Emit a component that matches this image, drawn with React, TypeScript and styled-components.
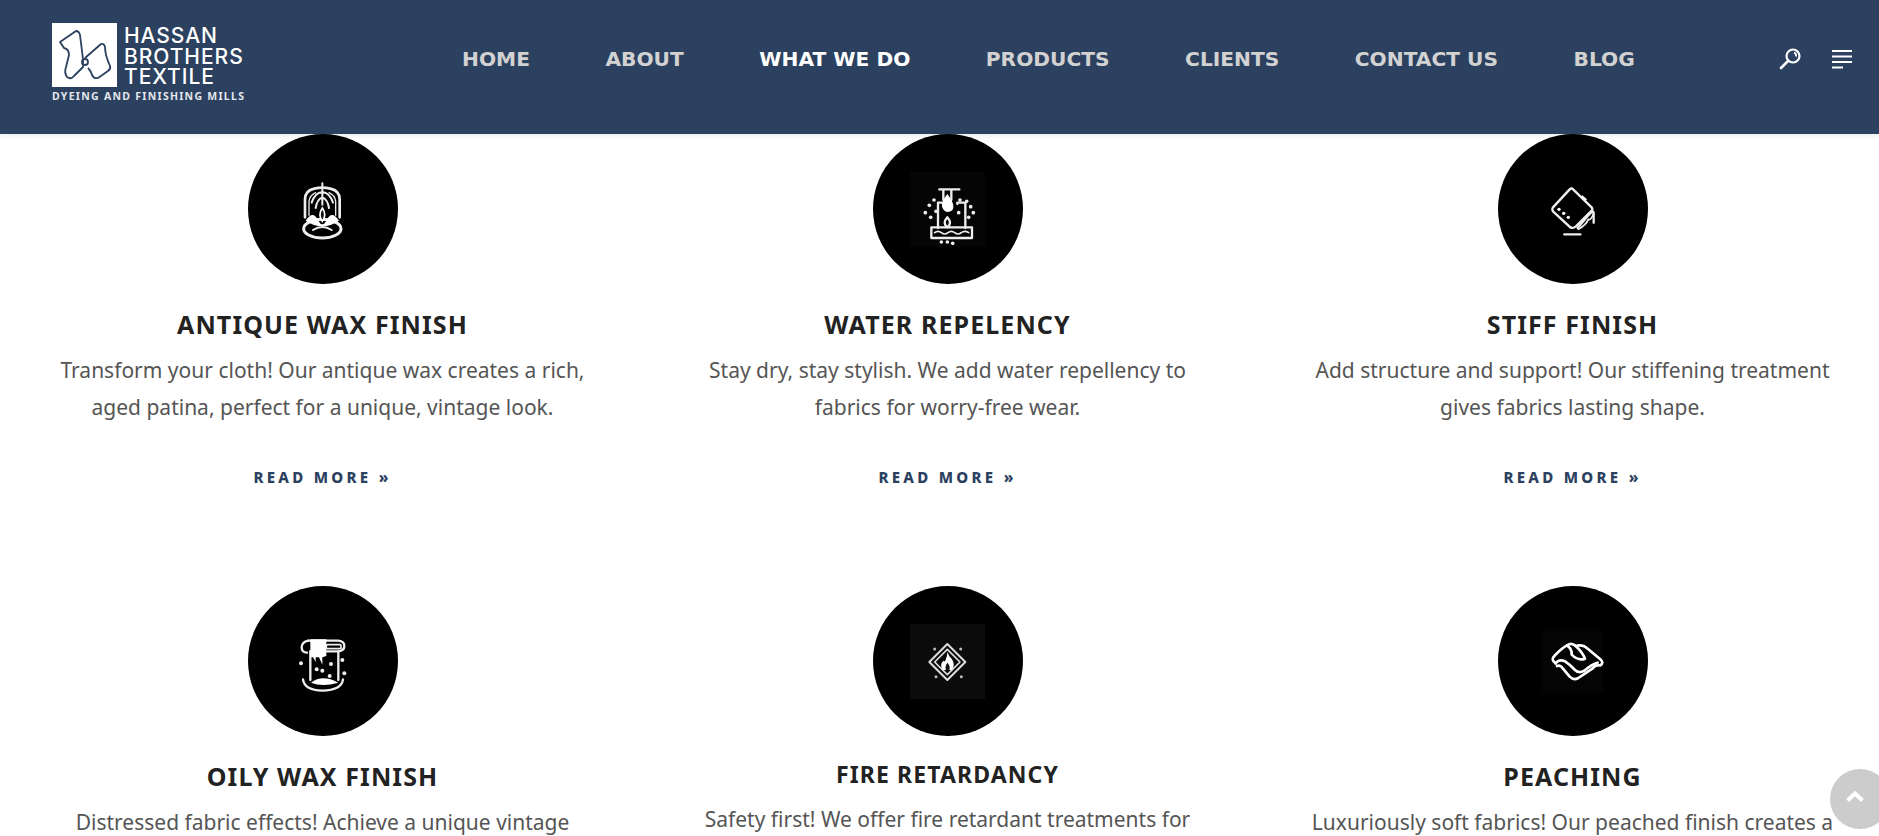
import React from "react";
import styled, { createGlobalStyle } from "styled-components";

const Global = createGlobalStyle`
  html, body { margin: 0; padding: 0; background: #fff; height: 836px; overflow: hidden; }
  * { box-sizing: border-box; }
`;

const Page = styled.div`
  width: 1879px;
  height: 836px;
  overflow: hidden;
  font-family: "Noto Sans", sans-serif;
`;

const Header = styled.header`
  height: 134px;
  background: #2c4160;
  display: flex;
  align-items: flex-start;
  box-shadow: 0 2px 6px rgba(0, 0, 0, 0.08);
  position: relative;
  z-index: 2;
`;

const Logo = styled.a`
  display: flex;
  flex-direction: column;
  width: 196px;
  margin: 23px 0 0 52px;
  color: #fff;
`;

const LogoTop = styled.div`
  display: flex;
  gap: 7px;
`;

const LogoMark = styled.svg`
  width: 65px;
  height: 64px;
  display: block;
  flex: none;
`;

const LogoName = styled.div`
  display: flex;
  flex-direction: column;
  font-family: Inter, "Noto Sans", sans-serif;
  font-size: 21px;
  font-weight: 500;
  letter-spacing: 0.95px;
  padding-top: 3px;
  white-space: nowrap;
`;

const LogoLine = styled.span`
  display: block;
  height: 20.5px;
  line-height: 20.5px;
`;

const LogoSub = styled.div`
  font-size: 10.5px;
  font-weight: 700;
  line-height: 12px;
  letter-spacing: 1.28px;
  margin-top: 2px;
  color: #e3e7ec;
  white-space: nowrap;
`;

const Nav = styled.nav`
  display: flex;
  gap: 75.5px;
  margin: 45px 0 0 214px;
`;

const NavItem = styled.a<{ $active?: boolean }>`
  font-family: "DejaVu Sans", sans-serif;
  font-size: 20.2px;
  font-weight: 700;
  line-height: 28px;
  white-space: nowrap;
  color: ${(p) => (p.$active ? "#ffffff" : "#d2d2d2")};
`;

const HeaderTools = styled.div`
  display: flex;
  gap: 28px;
  margin: 47px 25px 0 auto;
`;

const ToolIcon = styled.svg`
  width: 24px;
  height: 24px;
  display: block;
`;

const Grid = styled.main`
  display: grid;
  grid-template-columns: repeat(3, 625px);
  grid-auto-rows: 452px;
  margin-left: 10px;
`;

const Card = styled.article`
  display: flex;
  flex-direction: column;
  align-items: center;
  text-align: center;
`;

const Disc = styled.div`
  width: 150px;
  height: 150px;
  flex: none;
  border-radius: 50%;
  background: #000;
  display: flex;
  align-items: center;
  justify-content: center;
`;

const IconArt = styled.svg`
  width: 75px;
  height: 75px;
  display: block;
  filter: blur(0.35px);
`;

const Title = styled.h3<{ $compact?: boolean }>`
  margin: ${(p) => (p.$compact ? "21px" : "23px")} 0 0;
  font-size: ${(p) => (p.$compact ? "23px" : "25px")};
  line-height: 34px;
  font-weight: 700;
  letter-spacing: 1.1px;
  color: #222;
  white-space: nowrap;
`;

const Body = styled.p<{ $compact?: boolean }>`
  margin: ${(p) => (p.$compact ? "10px" : "11px")} 0 0;
  font-size: 21px;
  line-height: 37px;
  color: #555;
  white-space: nowrap;
`;

const More = styled.a`
  margin-top: 41px;
  font-size: 15px;
  line-height: 20px;
  font-weight: 800;
  letter-spacing: 3.3px;
  color: #2c4160;
  white-space: nowrap;
`;

const ToTop = styled.a`
  position: fixed;
  left: 1830px;
  top: 769px;
  width: 60px;
  height: 60px;
  border-radius: 50%;
  background: #ccc;
  display: flex;
  align-items: center;
  justify-content: center;
  z-index: 3;
`;

const ChevronArt = styled.svg`
  width: 20px;
  height: 14px;
  margin: 0 10px 6px 0;
  display: block;
`;

const W = { stroke: "#eee", fill: "none", strokeWidth: 7, strokeLinecap: "round" as const, strokeLinejoin: "round" as const };

const Wax = () => (
  <IconArt viewBox="0 0 225 225">
    <g {...W}>
      <path d="M60 136V82Q60 56 88 50Q112 44 136 50Q164 56 164 82V136" strokeWidth="8" />
      <path d="M72 130V88Q74 70 92 62M152 130V88Q150 70 132 62" strokeWidth="4" />
      <path d="M112 34V98M112 60Q90 62 80 92M112 60Q134 62 144 92M112 76Q96 82 92 108M112 76Q128 82 132 108" strokeWidth="6" />
      <ellipse cx="112" cy="170" rx="56" ry="28" strokeWidth="9" />
      <path d="M84 174Q112 156 140 174" strokeWidth="6" />
    </g>
    <path d="M62 146Q84 112 100 146Q112 168 124 146Q140 112 162 146Q112 180 62 146Z" fill="#fff" />
    <path d="M112 108Q98 128 112 148Q126 128 112 108Z" fill="#111" stroke="#fff" strokeWidth="5" />
  </IconArt>
);

const Water = () => (
  <IconArt viewBox="0 0 225 225">
    <rect width="225" height="225" fill="#050505" />
    <g {...W}>
      <path d="M88 52H148M100 52V84M124 52V84" />
      <path d="M84 92V168M142 92V96M142 92H166V168M84 92H96" />
      <path d="M64 166H186V198H64Z" />
      <path d="M74 182Q84 174 94 182T114 182T134 182T154 182T176 182" strokeWidth="5" />
      <path d="M112 136Q96 154 112 166Q128 154 112 136Z" />
    </g>
    <path d="M112 66Q92 92 96 104Q102 120 114 120Q132 118 130 102Q130 90 112 66Z" fill="#fff" />
    {[[46,122],[58,100],[72,84],[62,136],[150,84],[170,88],[182,104],[190,122],[176,136],[78,118],[146,122],[128,214],[112,210],[94,210]].map(([x,y],i)=>(
      <circle key={i} cx={x} cy={y} r="5.5" fill="#eee" />
    ))}
  </IconArt>
);

const Stiff = () => (
  <IconArt viewBox="0 0 225 225">
    <g {...W}>
      <path d="M112 50L170 106Q174 112 170 116L122 164Q114 170 106 166L54 118Q50 112 54 106L104 52Q108 48 112 50Z" />
      <path d="M128 168L160 130L170 120Q176 116 176 124V152" />
      <path d="M176 124Q168 146 160 142Q154 158 130 172" strokeWidth="5" />
      <path d="M88 187H136" />
    </g>
    <path d="M140 72l14 12" stroke="#fff" strokeWidth="6" />
    <circle cx="72" cy="112" r="5" fill="#fff" /><circle cx="86" cy="124" r="5" fill="#fff" /><circle cx="100" cy="136" r="5" fill="#fff" />
  </IconArt>
);

const Oily = () => (
  <IconArt viewBox="0 0 225 225">
    <g {...W}>
      <path d="M70 50H160Q178 52 178 66Q178 80 160 82H76" />
      <path d="M70 50Q50 54 50 70Q50 86 66 86" />
      <path d="M76 82V168M160 82V168" />
      <path d="M54 166Q58 198 112 200Q170 198 174 166" />
      <rect x="124" y="62" width="44" height="12" rx="3" strokeWidth="5" />
    </g>
    <path d="M76 46H124V96L112 100V122L102 100L92 100V114L84 100L76 100Z" fill="#fff" />
    <path d="M78 176Q112 150 160 176Q112 190 78 176Z" fill="#fff" />
    {[[48,118],[172,108],[178,148],[112,140],[95,136],[138,120],[134,156]].map(([x,y],i)=>(
      <circle key={i} cx={x} cy={y} r="6" fill="#eee" />
    ))}
  </IconArt>
);

const Fire = () => (
  <IconArt viewBox="0 0 225 225">
    <rect width="225" height="225" fill="#0b0b0b" />
    <g {...W} stroke="#ddd">
      <path d="M112 60L166 114L112 168L58 114Z" strokeWidth="6" />
      <path d="M112 76L150 114L112 152L74 114Z" strokeWidth="5" />
    </g>
    <path d="M112 84Q118 100 126 106Q136 122 126 138H98Q88 122 100 110Q104 114 106 110Q112 98 112 84Z" fill="#fff" />
    <path d="M112 116Q104 126 108 138H118Q122 126 112 116Z" fill="#111" />
    {[[74,75],[152,75],[78,158],[154,158]].map(([x,y],i)=>(
      <circle key={i} cx={x} cy={y} r="4.5" fill="#bbb" />
    ))}
  </IconArt>
);

const Peach = () => (
  <IconArt viewBox="0 0 225 225">
    <rect x="20" y="20" width="185" height="185" fill="#040404" />
    <g {...W} stroke="#fff" strokeWidth="8">
      <path d="M62 118Q46 106 58 96Q78 74 96 64Q110 54 122 66Q144 60 160 76L196 106Q208 116 196 124Q180 122 172 134L130 162Q116 170 104 158L84 134Q76 122 66 126" />
      <path d="M62 118Q72 104 90 112Q106 122 120 138Q132 150 148 140Q168 122 188 116" />
      <path d="M96 64Q112 76 110 92Q130 112 150 104Q142 84 122 66" />
    </g>
  </IconArt>
);

const items = [
  { art: <Wax />, title: "ANTIQUE WAX FINISH", lines: ["Transform your cloth! Our antique wax creates a rich,", "aged patina, perfect for a unique, vintage look."], more: true },
  { art: <Water />, title: "WATER REPELENCY", lines: ["Stay dry, stay stylish. We add water repellency to", "fabrics for worry-free wear."], more: true },
  { art: <Stiff />, title: "STIFF FINISH", lines: ["Add structure and support! Our stiffening treatment", "gives fabrics lasting shape."], more: true },
  { art: <Oily />, title: "OILY WAX FINISH", lines: ["Distressed fabric effects! Achieve a unique vintage"] },
  { art: <Fire />, title: "FIRE RETARDANCY", lines: ["Safety first! We offer fire retardant treatments for"], compact: true },
  { art: <Peach />, title: "PEACHING", lines: ["Luxuriously soft fabrics! Our peached finish creates a"] },
];

const nav = ["HOME", "ABOUT", "WHAT WE DO", "PRODUCTS", "CLIENTS", "CONTACT US", "BLOG"];

export default function App() {
  return (
    <Page>
      <Global />
      <Header>
        <Logo>
          <LogoTop>
            <LogoMark viewBox="0 0 65 64">
              <rect width="65" height="64" fill="#fff" />
              <g fill="none" stroke="#2c4160" strokeWidth="1.8" strokeLinejoin="round">
                <path d="M8 19L24 8Q27 8 28 12L31 36L31 44L22 53Q19 57 15 54Q12 50 14 44L17 32Q17 26 12 25Z" />
                <path d="M33 35L49 21Q52 20 53 24Q53 32 58 43Q59 46 56 48L46 55Q42 56 40 52Q39 48 36 45" />
                <circle cx="33" cy="39" r="3" />
              </g>
            </LogoMark>
            <LogoName>
              <LogoLine>HASSAN</LogoLine>
              <LogoLine>BROTHERS</LogoLine>
              <LogoLine>TEXTILE</LogoLine>
            </LogoName>
          </LogoTop>
          <LogoSub>DYEING AND FINISHING MILLS</LogoSub>
        </Logo>
        <Nav>
          {nav.map((n) => (
            <NavItem key={n} $active={n === "WHAT WE DO"}>{n}</NavItem>
          ))}
        </Nav>
        <HeaderTools>
          <ToolIcon viewBox="0 0 24 24">
            <circle cx="15" cy="9" r="6.5" fill="none" stroke="#fff" strokeWidth="2.2" />
            <path d="M10 14L3 21" stroke="#fff" strokeWidth="2.6" strokeLinecap="round" />
            <path d="M16 5.5a3.5 3.5 0 0 1 2 4" stroke="#fff" strokeWidth="1.8" fill="none" />
          </ToolIcon>
          <ToolIcon viewBox="0 0 24 24">
            <path d="M2 4H22M2 9.5H22M2 15H22" stroke="#fff" strokeWidth="2" />
            <path d="M2 20.5H13" stroke="#fff" strokeWidth="2" />
          </ToolIcon>
        </HeaderTools>
      </Header>
      <Grid>
        {items.map((it) => (
          <Card key={it.title}>
            <Disc>{it.art}</Disc>
            <Title $compact={it.compact}>{it.title}</Title>
            <Body $compact={it.compact}>
              {it.lines.map((l, i) => (
                <React.Fragment key={i}>{i > 0 && <br />}{l}</React.Fragment>
              ))}
            </Body>
            {it.more && <More>READ MORE »</More>}
          </Card>
        ))}
      </Grid>
      <ToTop>
        <ChevronArt viewBox="0 0 20 14">
          <path d="M2.5 11.5L10 4.5L17.5 11.5" fill="none" stroke="#fff" strokeWidth="4.2" />
        </ChevronArt>
      </ToTop>
    </Page>
  );
}
